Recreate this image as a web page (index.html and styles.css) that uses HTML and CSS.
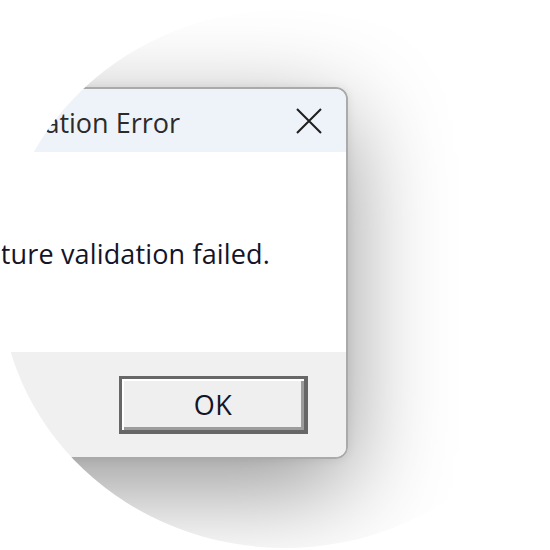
FILE: index.html
```html
<!DOCTYPE html>
<html>
<head>
<meta charset="utf-8">
<link rel="stylesheet" href="styles.css">
</head>
<body>
  <div class="lens">
    <div class="dialog">
      <div class="titlebar">
        <span class="title">Signature Validation Error</span>
        <svg class="close" viewBox="0 0 26 26" aria-hidden="true">
          <path d="M1 1 L25 25 M25 1 L1 25" stroke="#1e1e1e" stroke-width="2" fill="none"/>
        </svg>
      </div>
      <div class="content">
        <p class="message">Signature validation failed.</p>
      </div>
      <div class="footer">
        <button class="ok">OK</button>
      </div>
    </div>
  </div>
</body>
</html>
```

FILE: styles.css
```css
html, body {
  margin: 0;
  overflow: hidden;
  background: #ffffff;
}

body {
  width: 550px;
  height: 550px;
  padding-top: 10px;
  box-sizing: border-box;
}

.lens {
  width: 570px;
  height: 538px;
  border-radius: 50%;
  overflow: hidden;
  background: #ffffff;
  padding-top: 77px;
  box-sizing: border-box;
}

.dialog {
  margin-left: -302px;
  width: 650px;
  border: 2px solid #aaaaaa;
  border-radius: 12px;
  overflow: hidden;
  box-sizing: border-box;
  box-shadow: 0 30px 100px rgba(0, 0, 0, 0.42), 0 0 10px rgba(0, 0, 0, 0.08);
  font-family: "Open Sans", "Noto Sans", sans-serif;
  font-size: 27px;
  line-height: 32px;
}

.titlebar {
  display: flex;
  align-items: center;
  height: 63px;
  padding-right: 24px;
  background: #eef2f9;
}

.title {
  flex: 1;
  text-align: right;
  white-space: nowrap;
  padding-top: 4px;
  padding-right: 116px;
  color: #2b2b2b;
}

.close {
  width: 26px;
  height: 26px;
  flex: none;
}

.content {
  height: 200px;
  padding: 86px 76px 0 0;
  box-sizing: border-box;
  background: #ffffff;
}

.message {
  margin: 0;
  text-align: right;
  white-space: nowrap;
  font-weight: 500;
  letter-spacing: 0.15px;
  color: #141428;
}

.footer {
  height: 105px;
  display: flex;
  justify-content: flex-end;
  align-items: center;
  padding-right: 38px;
  background: #f0f0f0;
}

.ok {
  width: 189px;
  height: 58px;
  border: 3px solid #676767;
  border-right-width: 4px;
  border-bottom-width: 4px;
  box-shadow: inset 2px 2px 0 #ffffff, inset -3px -3px 0 #9c9c9c;
  background: #efefef;
  font-family: "Open Sans", "Noto Sans", sans-serif;
  font-size: 27px;
  font-weight: 500;
  letter-spacing: 0.5px;
  color: #141428;
  padding: 0;
}
```
